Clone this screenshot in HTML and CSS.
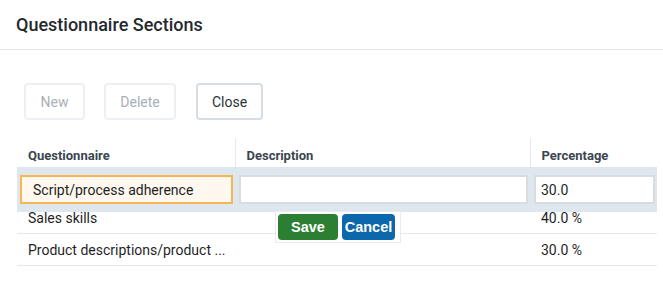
FILE: index.html
```html
<!DOCTYPE html>
<html>
<head>
<meta charset="utf-8">
<link rel="stylesheet" href="styles.css">
</head>
<body>
<div class="dialog">
  <div class="dialog-header">Questionnaire Sections</div>
  <div class="dialog-body">
    <div class="toolbar">
      <button class="btn btn-disabled">New</button>
      <button class="btn btn-disabled">Delete</button>
      <button class="btn btn-active">Close</button>
    </div>
    <div class="grid">
      <table class="grid-table">
        <colgroup>
          <col class="c1"><col class="c2"><col class="c3">
        </colgroup>
        <thead>
          <tr><th>Questionnaire</th><th>Description</th><th>Percentage</th></tr>
        </thead>
        <tbody>
          <tr><td>Script/process adherence</td><td></td><td>30.0 %</td></tr>
          <tr><td>Sales skills</td><td></td><td>40.0 %</td></tr>
          <tr><td>Product descriptions/product ...</td><td></td><td>30.0 %</td></tr>
        </tbody>
      </table>
      <div class="edit-row">
        <input class="edit-input i1 focused" value="Script/process adherence">
        <input class="edit-input i2" value="">
        <input class="edit-input i3" value="30.0">
      </div>
      <div class="edit-actions">
        <button class="act save">Save</button>
        <button class="act cancel">Cancel</button>
      </div>
    </div>
  </div>
</div>
</body>
</html>
```
FILE: styles.css
```css
html, body {
  margin: 0;
  padding: 0;
  background: #fff;
  font-family: Roboto, "Liberation Sans", sans-serif;
}
.dialog-header {
  height: 50px;
  box-sizing: border-box;
  padding: 14px 16px 0;
  font-size: 18px;
  font-weight: 500;
  color: #24292e;
  border-bottom: 1px solid #e3e3e3;
}
.dialog-body {
  padding: 33px 6px 0 17px;
}
.toolbar {
  display: flex;
  gap: 19px;
  padding-left: 7px;
}
.btn {
  height: 37px;
  box-sizing: border-box;
  border-radius: 4px;
  background: #fff;
  font-family: Roboto, sans-serif;
  font-size: 14px;
  padding: 0 8px;
}
.btn-disabled {
  border: 2px solid #edf0f2;
  color: #a9b0b6;
}
.btn-disabled:first-child { width: 61px; }
.btn-disabled:nth-child(2) { width: 72px; }
.btn-active {
  border: 2px solid #d6dee4;
  color: #2b3338;
  width: 67px;
  margin-left: 1px;
}
.grid {
  position: relative;
  width: 640px;
  margin-top: 19px;
}
.grid-table {
  width: 640px;
  border-collapse: collapse;
  table-layout: fixed;
}
.c1 { width: 218px; }
.c2 { width: 295px; }
.c3 { width: 127px; }
.grid-table th {
  height: 28px;
  padding: 0 11px;
  text-align: left;
  font-size: 13px;
  font-weight: 700;
  color: #3b4650;
  border-bottom: 1px solid #dfe5ea;
  border-left: 1px solid #e4e9ed;
  vertical-align: middle;
  padding-top: 2px;
}
.grid-table th:first-child { border-left: none; }
.grid-table td {
  height: 31px;
  padding: 0 11px;
  font-size: 14px;
  color: #1f1f1f;
  border-bottom: 1px solid #e4e9ed;
  white-space: nowrap;
  overflow: hidden;
}
.edit-row {
  position: absolute;
  left: 0;
  top: 28px;
  width: 640px;
  height: 45px;
  box-sizing: border-box;
  background: #dee6ee;
  display: flex;
  gap: 6px;
  padding: 8px 2px 0 3px;
}
.edit-input {
  height: 29px;
  box-sizing: border-box;
  border: 2px solid #d9dcde;
  background: #fff;
  font-family: Roboto, sans-serif;
  font-size: 14px;
  color: #1f1f1f;
  padding: 0 11px;
  outline: none;
}
.i1 { width: 213px; }
.i2 { width: 289px; }
.i3 { width: 121px; padding-left: 5px; }
.focused {
  border-color: #f6b654;
  background: #fef8ee;
}
.edit-actions {
  position: absolute;
  left: 258px;
  top: 72px;
  width: 126px;
  height: 32px;
  box-sizing: border-box;
  background: #fff;
  border: 1px solid #e8ecef;
  display: flex;
  gap: 4px;
  padding: 2px 0 0 2px;
}
.act {
  height: 26px;
  border: none;
  border-radius: 4px;
  color: #fff;
  font-family: "Liberation Sans", Arial, sans-serif;
  font-weight: 700;
  font-size: 14.5px;
  padding: 0;
}
.save { width: 60px; background: #2c7e33; }
.cancel { width: 53px; background: #0c68ab; }
```
